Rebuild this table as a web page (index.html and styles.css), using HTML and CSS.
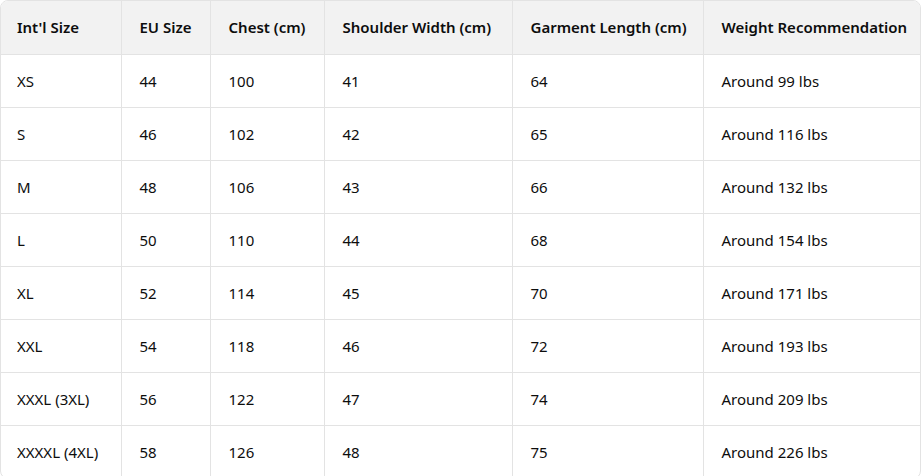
FILE: index.html
```html
<!DOCTYPE html>
<html>
<head>
<meta charset="utf-8">
<link rel="stylesheet" href="styles.css">
</head>
<body>
<div class="wrap">
<table class="size-table">
<colgroup>
<col class="c1"><col class="c2"><col class="c3"><col class="c4"><col class="c5"><col class="c6">
</colgroup>
<thead>
<tr><th>Int'l Size</th><th>EU Size</th><th>Chest (cm)</th><th>Shoulder Width (cm)</th><th>Garment Length (cm)</th><th>Weight Recommendation</th></tr>
</thead>
<tbody>
<tr><td>XS</td><td>44</td><td>100</td><td>41</td><td>64</td><td>Around 99 lbs</td></tr>
<tr><td>S</td><td>46</td><td>102</td><td>42</td><td>65</td><td>Around 116 lbs</td></tr>
<tr><td>M</td><td>48</td><td>106</td><td>43</td><td>66</td><td>Around 132 lbs</td></tr>
<tr><td>L</td><td>50</td><td>110</td><td>44</td><td>68</td><td>Around 154 lbs</td></tr>
<tr><td>XL</td><td>52</td><td>114</td><td>45</td><td>70</td><td>Around 171 lbs</td></tr>
<tr><td>XXL</td><td>54</td><td>118</td><td>46</td><td>72</td><td>Around 193 lbs</td></tr>
<tr><td>XXXL (3XL)</td><td>56</td><td>122</td><td>47</td><td>74</td><td>Around 209 lbs</td></tr>
<tr><td>XXXXL (4XL)</td><td>58</td><td>126</td><td>48</td><td>75</td><td>Around 226 lbs</td></tr>
</tbody>
</table>
</div>
</body>
</html>
```
FILE: styles.css
```css
html, body {
  margin: 0;
  padding: 0;
  background: #ffffff;
}
body {
  font-family: "Noto Sans", "Open Sans", sans-serif;
  font-size: 15px;
  color: #0d0d0d;
}
.wrap {
  width: 921px;
  border: 1px solid #e3e3e3;
  border-radius: 8px;
  overflow: hidden;
  box-sizing: border-box;
}
.size-table {
  width: 100%;
  border-collapse: collapse;
  table-layout: fixed;
}
.c1 { width: 120px; }
.c2 { width: 89px; }
.c3 { width: 114px; }
.c4 { width: 188px; }
.c5 { width: 191px; }
.c6 { width: auto; }
.size-table th,
.size-table td {
  height: 53px;
  padding: 0 0 0 18px;
  text-align: left;
  vertical-align: middle;
  border-left: 1px solid #e3e3e3;
  border-top: 1px solid #e3e3e3;
  white-space: nowrap;
  box-sizing: border-box;
}
.size-table th:first-child,
.size-table td:first-child {
  border-left: none;
  padding-left: 16px;
}
.size-table thead th {
  border-top: none;
  background: #f2f2f2;
  font-weight: 600;
}
```
